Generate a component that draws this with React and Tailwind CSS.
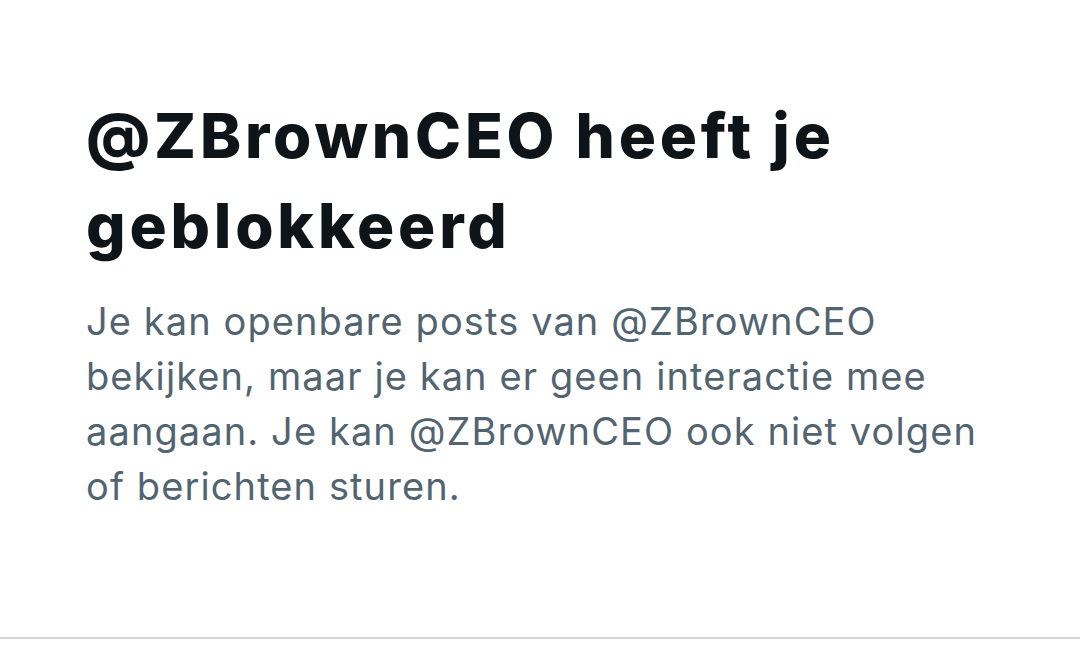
import React from 'react';

const App = () => {
  return (
    <div className="w-[1080px] h-[650px] bg-white flex flex-col overflow-hidden" style={{ fontFamily: 'Inter, "Noto Sans", sans-serif' }}>
      <div className="flex-1 pl-[86px] pr-[60px] pt-[91px]">
        <h1 className="text-[62px] leading-[90px] font-extrabold text-[#0f1419] tracking-[3.8px]">
          @ZBrownCEO heeft je geblokkeerd
        </h1>
        <p className="mt-[23px] text-[38px] leading-[55px] text-[#536471] tracking-[1.1px] max-w-[900px]">
          Je kan openbare posts van @ZBrownCEO bekijken, maar je kan er geen interactie mee aangaan. Je kan @ZBrownCEO ook niet volgen of berichten sturen.
        </p>
      </div>
      <div className="h-[2px] bg-[#d4d4d4] mb-[11px]" />
    </div>
  );
};

export default App;
